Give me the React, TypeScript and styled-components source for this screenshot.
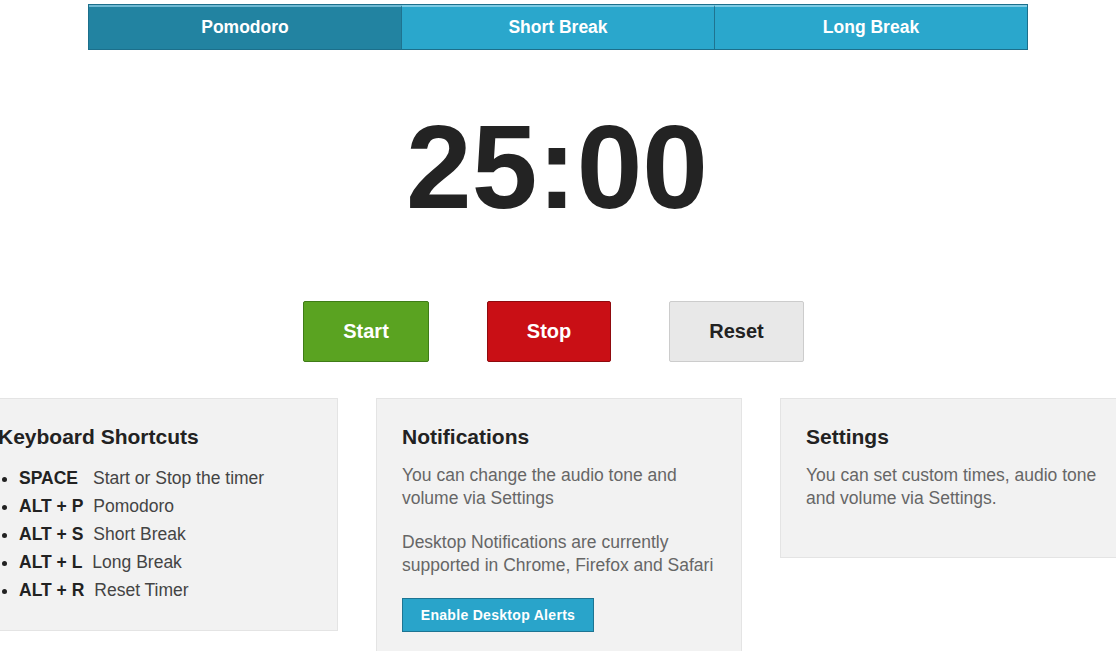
import React from "react";
import styled, { createGlobalStyle } from "styled-components";

const GlobalStyle = createGlobalStyle`
  html, body {
    margin: 0;
    padding: 0;
    background: #ffffff;
    overflow: hidden;
  }
  body {
    font-family: "Liberation Sans", Arial, sans-serif;
    color: #222;
  }
`;

const Page = styled.div`
  width: 100%;
  overflow: hidden;
  padding-top: 4px;
`;

const TabBar = styled.nav`
  width: 940px;
  margin: 0 auto;
  display: flex;
  border: 1px solid #1c6f8b;
  box-sizing: border-box;
  height: 46px;
`;

const Tab = styled.div<{ $active?: boolean }>`
  flex: 1;
  display: flex;
  align-items: center;
  justify-content: center;
  background: ${(p) => (p.$active ? "#2283a1" : "#2aa7cc")};
  border-top: 2px solid ${(p) => (p.$active ? "#6fb9d3" : "#7ecbe4")};
  border-left: 1px solid #1f7390;
  color: #fff;
  font-size: 17.5px;
  font-weight: bold;
  padding-bottom: 2px;
  &:first-child {
    border-left: none;
  }
`;

const Timer = styled.div`
  text-align: center;
  font-size: 118px;
  font-weight: bold;
  color: #232323;
  line-height: 136px;
  margin-top: 49px;
  padding-right: 2px;
`;

const Controls = styled.div`
  display: flex;
  justify-content: center;
  gap: 58px;
  margin-top: 66px;
  padding-right: 9px;
`;

const variants = {
  start: { bg: "#5aa321", border: "#3f7c17", color: "#fff" },
  stop: { bg: "#c90f15", border: "#8f0a0e", color: "#fff" },
  reset: { bg: "#e8e8e8", border: "#cccccc", color: "#222" },
};

const ActionButton = styled.button<{ $kind: keyof typeof variants }>`
  font-family: "Liberation Sans", Arial, sans-serif;
  font-size: 20px;
  font-weight: bold;
  line-height: 23px;
  padding: 18px 39px;
  border-radius: 2px;
  border: 1px solid ${(p) => variants[p.$kind].border};
  background: ${(p) => variants[p.$kind].bg};
  color: ${(p) => variants[p.$kind].color};
  cursor: pointer;
`;

const Panels = styled.div`
  display: flex;
  justify-content: center;
  align-items: flex-start;
  gap: 38px;
  margin-top: 36px;
  padding-left: 2px;
`;

const Panel = styled.section`
  flex: 0 0 366px;
  box-sizing: border-box;
  background: #f2f2f2;
  border: 1px solid #e4e4e4;
  padding: 25px 25px 26px;
`;

const PanelTitle = styled.h3`
  margin: 0 0 15px;
  font-size: 21px;
  line-height: 25px;
  font-weight: bold;
  color: #222;
`;

const Text = styled.p`
  margin: 0 0 21px;
  font-size: 17.5px;
  line-height: 23px;
  color: #666;
`;

const ShortcutList = styled.ul`
  margin: 0;
  padding-left: 21px;
  list-style: disc;
`;

const Shortcut = styled.li`
  font-size: 17.5px;
  line-height: 28px;
  color: #444;
  &::marker {
    color: #222;
  }
`;

const Key = styled.strong<{ $gap: number }>`
  color: #222;
  font-weight: bold;
  margin-right: ${(p) => p.$gap}px;
`;

const AlertButton = styled.button`
  font-family: "Liberation Sans", Arial, sans-serif;
  font-size: 14px;
  font-weight: bold;
  letter-spacing: 0.3px;
  color: #fff;
  background: #29a4ca;
  border: 1px solid #1d7593;
  height: 34px;
  width: 192px;
  padding: 0;
  cursor: pointer;
`;

const shortcuts = [
  { key: "SPACE", gap: 15, label: "Start or Stop the timer" },
  { key: "ALT + P", gap: 10, label: "Pomodoro" },
  { key: "ALT + S", gap: 10, label: "Short Break" },
  { key: "ALT + L", gap: 10, label: "Long Break" },
  { key: "ALT + R", gap: 10, label: "Reset Timer" },
];

export default function App() {
  return (
    <>
      <GlobalStyle />
      <Page>
        <TabBar>
          <Tab $active>Pomodoro</Tab>
          <Tab>Short Break</Tab>
          <Tab>Long Break</Tab>
        </TabBar>
        <Timer>25:00</Timer>
        <Controls>
          <ActionButton $kind="start">Start</ActionButton>
          <ActionButton $kind="stop">Stop</ActionButton>
          <ActionButton $kind="reset">Reset</ActionButton>
        </Controls>
        <Panels>
          <Panel>
            <PanelTitle>Keyboard Shortcuts</PanelTitle>
            <ShortcutList>
              {shortcuts.map((s) => (
                <Shortcut key={s.key}>
                  <Key $gap={s.gap}>{s.key}</Key>
                  {s.label}
                </Shortcut>
              ))}
            </ShortcutList>
          </Panel>
          <Panel>
            <PanelTitle>Notifications</PanelTitle>
            <Text>You can change the audio tone and volume via Settings</Text>
            <Text>
              Desktop Notifications are currently supported in Chrome, Firefox
              and Safari
            </Text>
            <AlertButton>Enable Desktop Alerts</AlertButton>
            <Text />
          </Panel>
          <Panel>
            <PanelTitle>Settings</PanelTitle>
            <Text>
              You can set custom times, audio tone and volume via Settings.
            </Text>
          </Panel>
        </Panels>
      </Page>
    </>
  );
}
